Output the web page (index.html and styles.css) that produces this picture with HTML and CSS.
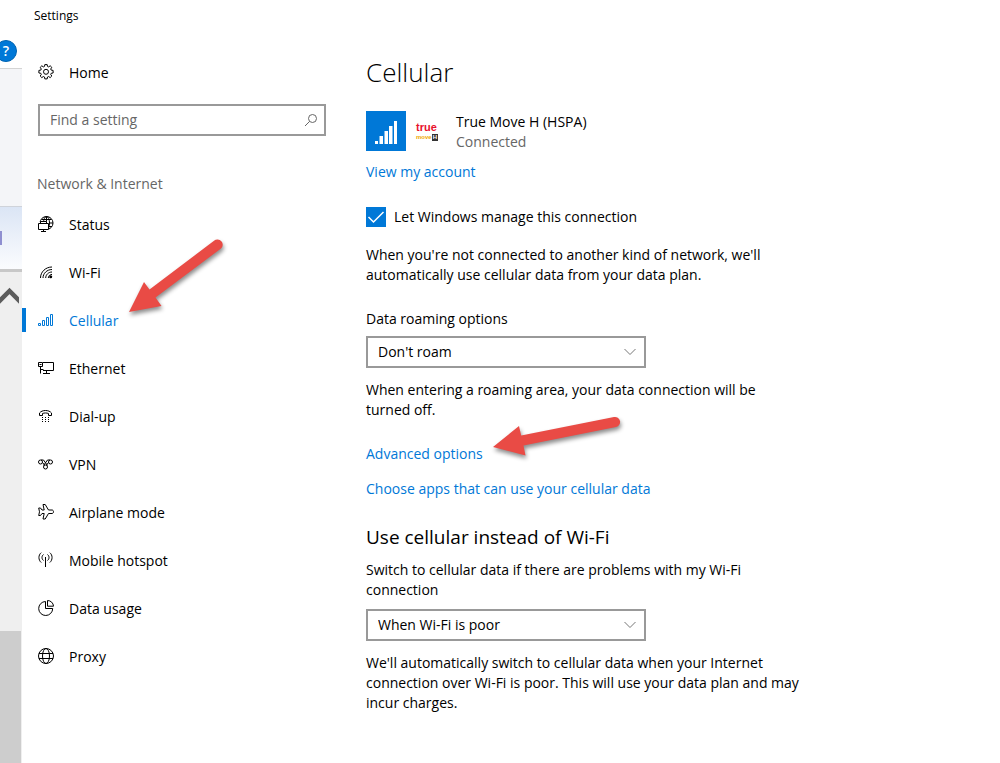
FILE: index.html
```html
<!DOCTYPE html>
<html lang="en">
<head>
<meta charset="utf-8">
<title>Settings</title>
<link rel="stylesheet" href="styles.css">
</head>
<body>
<div class="desktop">
  <div class="backdrop">
    <div class="backdrop-top"><span class="help">?</span></div>
    <div class="backdrop-panel"></div>
    <div class="backdrop-band"><span class="band-mark"></span></div>
    <div class="backdrop-scroll">
      <svg class="scroll-up" viewBox="0 0 19 20" width="19" height="20"><path d="M-2 17.500 9.500 6 21 17.500" fill="none" stroke="#5c5c5c" stroke-width="4.500"/></svg>
    </div>
    <div class="backdrop-thumb"></div>
  </div>

  <div class="window">
    <header class="titlebar">Settings</header>
    <div class="columns">
      <nav class="sidebar">
        <a class="nav-item home" href="#">
          <svg class="icon" viewBox="0 0 16 16"><path d="M6.800.6h2.400l.3 1.800 1.100.5 1.600-1.100 1.600 1.600-1.100 1.600.5 1.100 1.900.3v2.600l-1.900.3-.5 1.100 1.100 1.600-1.600 1.600-1.600-1.100-1.100.5-.3 1.900H6.800l-.3-1.900-1.100-.5-1.600 1.100-1.600-1.600 1.100-1.600-.5-1.100-1.900-.3V6.400l1.900-.3.5-1.100-1.100-1.600 1.600-1.600 1.600 1.100 1.100-.5z"/><circle cx="8" cy="7.800" r="2.500"/></svg>
          <span class="nav-label">Home</span>
        </a>
        <div class="search">
          <input class="search-input" type="text" placeholder="Find a setting" aria-label="Find a setting">
          <svg class="search-icon" viewBox="0 0 14 14"><circle cx="8.500" cy="5.500" r="4"/><path d="M5.600 8.400 1 13"/></svg>
        </div>
        <h2 class="nav-heading">Network &amp; Internet</h2>
        <a class="nav-item" href="#">
          <svg class="icon" viewBox="0 0 16 16"><circle cx="8.500" cy="7" r="6.500"/><ellipse cx="8.500" cy="7" rx="3" ry="6.500"/><path d="M3.500 3.500h10M2 7h13M8.500 10.500h5.500M8.500.5v5"/><path class="paper" d="M0 6h11v8H0z"/><path d="M.5 7.500h10v6H.5zM5.500 13.500v2M3 15.500h5M2.500 7.500v-2h6v2"/></svg>
          <span class="nav-label">Status</span>
        </a>
        <a class="nav-item" href="#">
          <svg class="icon" viewBox="0 0 16 16"><path d="M2.500 14C2.500 8 7.500 3 14 3M5 14c0-4.600 4-8.500 9-8.500M7.700 14c0-3.200 2.800-6 6.300-6M10.300 14c0-2 1.700-3.600 3.700-3.600"/><circle cx="12.700" cy="12.800" r="1.500" class="solid"/></svg>
          <span class="nav-label">Wi-Fi</span>
        </a>
        <a class="nav-item active" href="#" aria-current="page">
          <svg class="icon" viewBox="0 0 16 16"><path d="M.5 11.500h2v2h-2zM4.500 8.500h2v5h-2zM8.500 5.500h2v8h-2zM12.500 2.500h2v11h-2z"/></svg>
          <span class="nav-label">Cellular</span>
        </a>
        <a class="nav-item" href="#">
          <svg class="icon" viewBox="0 0 16 16"><path d="M5 2.500h10.500v8H5M8.500 10.500v3M5 13.500h7M.5 2.500h4v4h-4zM2.500 6.500v7M2.500 9.500h3M1.500 4.500h2"/></svg>
          <span class="nav-label">Ethernet</span>
        </a>
        <a class="nav-item" href="#">
          <svg class="icon" viewBox="0 0 16 16"><path d="M1.500 7.500V5c1.300-1.600 3.400-2.500 6-2.500s4.700.9 6 2.500v2.500h-3v-2c-1.800-.7-4.200-.7-6 0v2z"/><path class="solid" d="M4 9h1v1H4zm3 0h1v1H7zm3 0h1v1h-1zM4 11h1v1H4zm3 0h1v1H7zm3 0h1v1h-1zM4 13h1v1H4zm3 0h1v1H7zm3 0h1v1h-1z"/></svg>
          <span class="nav-label">Dial-up</span>
        </a>
        <a class="nav-item" href="#">
          <svg class="icon" viewBox="0 0 16 16"><circle cx="2.500" cy="6" r="2"/><circle cx="12.500" cy="6" r="2"/><circle cx="7.500" cy="11" r="2"/><path d="M3 4h2.500l4 5.500M12 4H9.500l-4 5.500M4.500 6.500l2 2.500M10.500 6.500l-2 2.500"/></svg>
          <span class="nav-label">VPN</span>
        </a>
        <a class="nav-item" href="#">
          <svg class="icon" viewBox="0 0 16 16"><path d="M5 .5h2.200L10.500 6H14c2 0 2 3.500 0 3.500h-3.500L7.200 15H5l1.200-5.500H4L2.500 11.500H.7L1.500 7.800.7 4h1.800L4 6h2.200z"/></svg>
          <span class="nav-label">Airplane mode</span>
        </a>
        <a class="nav-item" href="#">
          <svg class="icon" viewBox="0 0 16 16"><path d="M7.500 5v10M3.200 10.500C.2 8 .2 3 3.200.7M11.800 10.500c3-2.500 3-7.500 0-9.800M5.500 8.500c-2-1.500-2-4.500 0-6M9.500 8.500c2-1.500 2-4.500 0-6"/></svg>
          <span class="nav-label">Mobile hotspot</span>
        </a>
        <a class="nav-item" href="#">
          <svg class="icon" viewBox="0 0 16 16"><path d="M7.500 1.500a7 7 0 1 0 7.200 7H7.500zM9.500.5v5.700h6A6 6 0 0 0 9.500.5z"/></svg>
          <span class="nav-label">Data usage</span>
        </a>
        <a class="nav-item" href="#">
          <svg class="icon" viewBox="0 0 16 16"><circle cx="8" cy="8" r="7.500"/><ellipse cx="8" cy="8" rx="3.500" ry="7.500"/><path d="M1 5.500h14M1 10.500h14"/></svg>
          <span class="nav-label">Proxy</span>
        </a>
      </nav>

      <main class="content">
        <h1 class="page-title">Cellular</h1>
        <div class="carrier">
          <svg class="carrier-tile" viewBox="0 0 40 40"><path fill="#0078d7" d="M0 0h40v40H0z"/><path fill="#fff" d="M9 30h3v3H9zM13.500 25h3.500v8h-3.500zM18.500 20H22v13h-3.500zM23 15h3.500v18H23zM28 10h3v23h-3z"/></svg>
          <span class="brand"><span class="brand-true">true</span><span class="brand-line"><span class="brand-move">move</span><span class="brand-h">H</span></span></span>
          <div class="carrier-text">
            <div>True Move H (HSPA)</div>
            <div class="muted">Connected</div>
          </div>
        </div>
        <a class="link account" href="#">View my account</a>
        <label class="check">
          <input class="check-box" type="checkbox" checked>
          <svg class="check-mark" viewBox="0 0 20 20"><path d="M2.500 10 7.500 15 17.500 5"/></svg>
          <span>Let Windows manage this connection</span>
        </label>
        <p class="text">When you're not connected to another kind of network, we'll automatically use cellular data from your data plan.</p>
        <label class="field-label" for="roaming">Data roaming options</label>
        <div class="select">
          <select class="select-box" id="roaming"><option>Don't roam</option></select>
          <svg class="select-arrow" viewBox="0 0 12 8"><path d="M.5 1 6 6.500 11.500 1"/></svg>
        </div>
        <p class="text note">When entering a roaming area, your data connection will be turned off.</p>
        <a class="link advanced" href="#">Advanced options</a>
        <a class="link choose" href="#">Choose apps that can use your cellular data</a>
        <h2 class="section-title">Use cellular instead of Wi-Fi</h2>
        <label class="text" for="fallback">Switch to cellular data if there are problems with my Wi-Fi connection</label>
        <div class="select fallback">
          <select class="select-box" id="fallback"><option>When Wi-Fi is poor</option></select>
          <svg class="select-arrow" viewBox="0 0 12 8"><path d="M.5 1 6 6.500 11.500 1"/></svg>
        </div>
        <p class="text note">We'll automatically switch to cellular data when your Internet connection over Wi-Fi is poor. This will use your data plan and may incur charges.</p>
      </main>
    </div>
  </div>

  <svg class="arrow arrow-nav" viewBox="0 0 110 90"><path d="M9 73 24 43 29.500 50.500 94 1.800A5 5 0 0 1 101 9.500L35.500 58.500 41.500 67z"/></svg>
  <svg class="arrow arrow-link" viewBox="0 0 145 55"><path d="M8 32 34 11 36.200 20.500 129 2A5 5 0 0 1 131 12L38.500 30.500 40.500 40.500z"/></svg>
</div>
</body>
</html>
```
FILE: styles.css
```css
* { box-sizing: border-box; }

body {
  margin: 0;
  background: #fff;
  color: #000;
  font: 14px/20px "Open Sans", "Noto Sans", sans-serif;
}

h1, h2, p { margin: 0; font-weight: 400; }
a { color: inherit; text-decoration: none; }

.desktop { position: relative; display: flex; min-height: 100vh; overflow: hidden; }

/* Strip of the window behind */
.backdrop { display: flex; flex-direction: column; flex: none; width: 22px; background: #efefef; }
.backdrop-top { height: 69px; padding-top: 40px; background: #fff; border-bottom: 1px solid #d4d4d4; }
.help {
  display: block; width: 22px; height: 22px; margin-left: -5px;
  border: 1px solid #0063b1; border-radius: 50%;
  background: #0078d7; color: #fff; text-align: center; font-size: 14px; font-weight: 600;
}
.backdrop-panel { height: 137px; background: #f4f5f8; }
.backdrop-band {
  height: 66px; padding-top: 24px;
  border-top: 1px solid #cfd3da; border-bottom: 3px solid #c8c8c8;
  background: linear-gradient(#dbe5f5, #fbfcfe);
}
.band-mark { display: block; width: 2px; height: 14px; background: #8f8fd0; }
.backdrop-scroll { height: 359px; padding-top: 13px; }
.scroll-up { display: block; }
.backdrop-thumb { flex: 1; width: 21px; background: #cdcdcd; }

.window { flex: 1; min-width: 0; }
.titlebar { height: 32px; padding-left: 12px; font-size: 12px; line-height: 32px; }
.columns { display: flex; }

.sidebar { flex: none; width: 304px; padding-top: 16px; }
.nav-item {
  display: flex; align-items: center; gap: 15px;
  height: 48px; padding-left: 16px;
}
.nav-label { padding-top: 2px; }
.active { position: relative; color: #0078d7; }
.active::before {
  content: ""; position: absolute; left: 0; top: 12px;
  width: 4px; height: 24px; background: #0078d7;
}
.icon { width: 16px; height: 16px; fill: none; stroke: currentColor; }
.solid { fill: currentColor; stroke: none; }
.paper { fill: #fff; stroke: none; }

.search {
  display: flex; align-items: center;
  height: 32px; margin: 8px 0 0 16px; padding: 0 6px 0 10px;
  border: 2px solid #999;
}
.search-input {
  flex: 1; min-width: 0; padding: 0; border: 0; outline: 0;
  background: none; color: #000; font: inherit;
}
.search-input::placeholder { color: #666; opacity: 1; }
.search-icon { width: 14px; height: 14px; fill: none; stroke: #666; }
.nav-heading { margin: 32px 0 0 15px; color: #666; font-size: 14px; line-height: 32px; }

.content {
  display: flex; flex-direction: column; align-items: flex-start;
  flex: 1; min-width: 0; padding: 24px 16px 24px 40px;
}
.page-title { font-size: 26px; font-weight: 300; line-height: 32px; }
.carrier { display: flex; align-items: center; margin-top: 22px; }
.carrier-tile { width: 40px; height: 40px; }
.carrier-text { padding-top: 2px; }
.brand {
  display: flex; flex-direction: column; width: 22px; margin: 0 18px 0 10px;
  font-family: "Liberation Sans", sans-serif; font-weight: 700;
}
.brand-true { color: #e8112d; font-size: 11px; line-height: 13px; }
.brand-line { display: flex; font-size: 6px; line-height: 7px; }
.brand-move { color: #f0a800; }
.brand-h { padding: 0 1px; background: #333; color: #fff; }
.muted { color: #666; }
.link { color: #0078d7; }
.account { margin-top: 10px; }

.check { display: grid; grid-template-columns: 20px auto; column-gap: 8px; margin-top: 25px; }
.check-box {
  grid-area: 1 / 1; appearance: none; width: 20px; height: 20px; margin: 0;
  border: 2px solid #333;
}
.check-box:checked { border: 0; background: #0078d7; }
.check-mark { grid-area: 1 / 1; width: 20px; height: 20px; fill: none; stroke: #fff; stroke-width: 1.500; pointer-events: none; }

.text { max-width: 436px; }
.check + .text { margin-top: 18px; }
.field-label { margin-top: 24px; }
.select { display: grid; align-items: center; width: 280px; max-width: 100%; margin-top: 7px; }
.select-box {
  grid-area: 1 / 1; appearance: none; width: 100%; height: 32px; padding: 0 32px 0 10px;
  border: 2px solid #999; border-radius: 0; background: #fff; color: #000; font: inherit;
}
.select-arrow {
  grid-area: 1 / 1; justify-self: end; width: 12px; height: 8px; margin-right: 10px;
  fill: none; stroke: #777; pointer-events: none;
}
.fallback { margin-top: 9px; }
.note { margin-top: 12px; }
.advanced { margin-top: 24px; }
.choose { margin-top: 15px; }
.section-title { margin: 25px 0 10px; font-size: 19px; line-height: 26px; }

/* Callout arrows lying over the window */
.arrow { position: absolute; fill: #e94b45; filter: drop-shadow(1px 3px 2px rgba(0, 0, 0, 0.45)); pointer-events: none; }
.arrow-nav { left: 120px; top: 239px; width: 110px; height: 90px; }
.arrow-link { left: 485px; top: 415px; width: 145px; height: 55px; }
```
